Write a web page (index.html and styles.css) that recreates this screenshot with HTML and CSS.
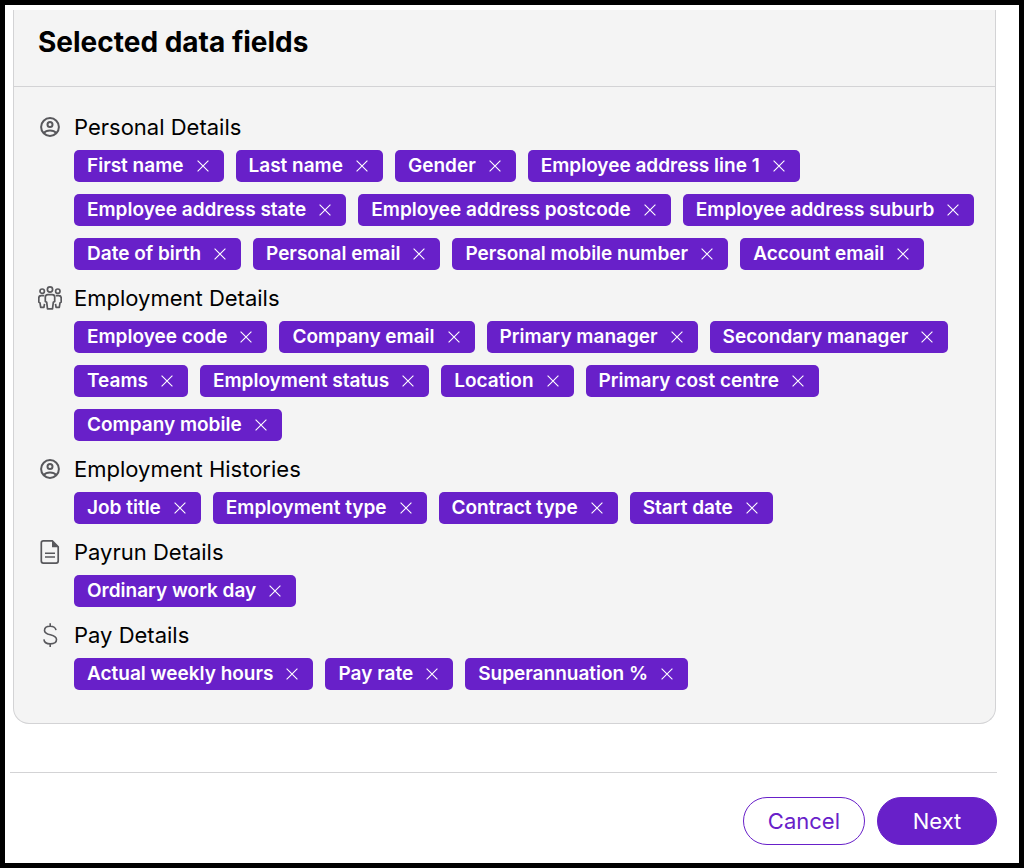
FILE: index.html
```html
<!DOCTYPE html>
<html lang="en">
<head>
<meta charset="utf-8">
<meta name="viewport" content="width=device-width, initial-scale=1">
<title>Selected data fields</title>
<link rel="stylesheet" href="styles.css">
</head>
<body>
<svg class="sprite" aria-hidden="true">
  <symbol id="close" viewBox="0 0 12 12"><path d="M.6.6 11.4 11.4M11.4.6.6 11.4" fill="none" stroke="currentColor" stroke-width="1.1"/></symbol>
  <symbol id="user" viewBox="0 0 24 24"><g fill="none" stroke="currentColor" stroke-width="2"><circle cx="12" cy="12" r="8.900"/><circle cx="12" cy="9.500" r="2.500"/><path d="M5.600 18.200c1.600-1.900 3.800-2.700 6.400-2.700s4.800.8 6.400 2.700"/></g></symbol>
  <symbol id="team" viewBox="0 0 24 24"><g fill="none" stroke="currentColor" stroke-width="1.700" stroke-linejoin="round"><circle cx="12" cy="3.500" r="2.600"/><circle cx="4.200" cy="5.200" r="2.200"/><circle cx="19.800" cy="5.200" r="2.200"/><path d="M9.800 8.700h4.400c1.700 0 2.500 1 2.500 2.500v4.300l-1.400.8-.8 6.500h-5l-.8-6.500-1.400-.8v-4.300c0-1.500.8-2.500 2.500-2.500z"/><path d="M6.300 9.600H3.200C1.600 9.600.8 10.500.8 12v4l1.200.9.700 4.400h3.200l.6-3.500M17.700 9.600h3.100c1.600 0 2.400.9 2.400 2.400v4l-1.200.9-.7 4.400h-3.200l-.6-3.500"/></g></symbol>
  <symbol id="document" viewBox="0 0 24 24"><path d="M5.300.9h9l5.900 6v14.200a2 2 0 0 1-2 2H5.300a2 2 0 0 1-2-2V2.900a2 2 0 0 1 2-2z" fill="none" stroke="currentColor" stroke-width="1.700"/><path d="M14 .8v6.400h6.500z" fill="currentColor"/><path d="M7 13.200h10M7 17h10" stroke="currentColor" stroke-width="1.500"/></symbol>
  <symbol id="dollar" viewBox="0 0 24 24"><path d="M18 7.200C17.600 4.700 15.300 3.200 12.100 3.200 8.700 3.200 6.500 4.900 6.500 7.400c0 6 12 2.800 12 9.200 0 2.600-2.500 4.300-6.200 4.300-3.700 0-6.100-1.700-6.400-4.500M12.200.2v3M12.200 20.900v3" fill="none" stroke="currentColor" stroke-width="1.600"/></symbol>
</svg>
<main class="page">
  <section class="card">
    <header class="card-header"><h1 class="title">Selected data fields</h1></header>
    <div class="card-body">
      <section class="group">
        <svg class="icon"><use href="#user"/></svg>
        <h2 class="group-title">Personal Details</h2>
        <ul class="chips">
          <li class="chip">First name<button class="remove" aria-label="Remove First name"><svg class="cross"><use href="#close"/></svg></button></li>
          <li class="chip">Last name<button class="remove" aria-label="Remove Last name"><svg class="cross"><use href="#close"/></svg></button></li>
          <li class="chip">Gender<button class="remove" aria-label="Remove Gender"><svg class="cross"><use href="#close"/></svg></button></li>
          <li class="chip">Employee address line 1<button class="remove" aria-label="Remove Employee address line 1"><svg class="cross"><use href="#close"/></svg></button></li>
          <li class="chip">Employee address state<button class="remove" aria-label="Remove Employee address state"><svg class="cross"><use href="#close"/></svg></button></li>
          <li class="chip">Employee address postcode<button class="remove" aria-label="Remove Employee address postcode"><svg class="cross"><use href="#close"/></svg></button></li>
          <li class="chip">Employee address suburb<button class="remove" aria-label="Remove Employee address suburb"><svg class="cross"><use href="#close"/></svg></button></li>
          <li class="chip">Date of birth<button class="remove" aria-label="Remove Date of birth"><svg class="cross"><use href="#close"/></svg></button></li>
          <li class="chip">Personal email<button class="remove" aria-label="Remove Personal email"><svg class="cross"><use href="#close"/></svg></button></li>
          <li class="chip">Personal mobile number<button class="remove" aria-label="Remove Personal mobile number"><svg class="cross"><use href="#close"/></svg></button></li>
          <li class="chip">Account email<button class="remove" aria-label="Remove Account email"><svg class="cross"><use href="#close"/></svg></button></li>
        </ul>
      </section>
      <section class="group">
        <svg class="icon"><use href="#team"/></svg>
        <h2 class="group-title">Employment Details</h2>
        <ul class="chips">
          <li class="chip">Employee code<button class="remove" aria-label="Remove Employee code"><svg class="cross"><use href="#close"/></svg></button></li>
          <li class="chip">Company email<button class="remove" aria-label="Remove Company email"><svg class="cross"><use href="#close"/></svg></button></li>
          <li class="chip">Primary manager<button class="remove" aria-label="Remove Primary manager"><svg class="cross"><use href="#close"/></svg></button></li>
          <li class="chip">Secondary manager<button class="remove" aria-label="Remove Secondary manager"><svg class="cross"><use href="#close"/></svg></button></li>
          <li class="chip">Teams<button class="remove" aria-label="Remove Teams"><svg class="cross"><use href="#close"/></svg></button></li>
          <li class="chip">Employment status<button class="remove" aria-label="Remove Employment status"><svg class="cross"><use href="#close"/></svg></button></li>
          <li class="chip">Location<button class="remove" aria-label="Remove Location"><svg class="cross"><use href="#close"/></svg></button></li>
          <li class="chip">Primary cost centre<button class="remove" aria-label="Remove Primary cost centre"><svg class="cross"><use href="#close"/></svg></button></li>
          <li class="chip">Company mobile<button class="remove" aria-label="Remove Company mobile"><svg class="cross"><use href="#close"/></svg></button></li>
        </ul>
      </section>
      <section class="group">
        <svg class="icon"><use href="#user"/></svg>
        <h2 class="group-title">Employment Histories</h2>
        <ul class="chips">
          <li class="chip">Job title<button class="remove" aria-label="Remove Job title"><svg class="cross"><use href="#close"/></svg></button></li>
          <li class="chip">Employment type<button class="remove" aria-label="Remove Employment type"><svg class="cross"><use href="#close"/></svg></button></li>
          <li class="chip">Contract type<button class="remove" aria-label="Remove Contract type"><svg class="cross"><use href="#close"/></svg></button></li>
          <li class="chip">Start date<button class="remove" aria-label="Remove Start date"><svg class="cross"><use href="#close"/></svg></button></li>
        </ul>
      </section>
      <section class="group">
        <svg class="icon"><use href="#document"/></svg>
        <h2 class="group-title">Payrun Details</h2>
        <ul class="chips">
          <li class="chip">Ordinary work day<button class="remove" aria-label="Remove Ordinary work day"><svg class="cross"><use href="#close"/></svg></button></li>
        </ul>
      </section>
      <section class="group">
        <svg class="icon"><use href="#dollar"/></svg>
        <h2 class="group-title">Pay Details</h2>
        <ul class="chips">
          <li class="chip">Actual weekly hours<button class="remove" aria-label="Remove Actual weekly hours"><svg class="cross"><use href="#close"/></svg></button></li>
          <li class="chip">Pay rate<button class="remove" aria-label="Remove Pay rate"><svg class="cross"><use href="#close"/></svg></button></li>
          <li class="chip">Superannuation %<button class="remove" aria-label="Remove Superannuation %"><svg class="cross"><use href="#close"/></svg></button></li>
        </ul>
      </section>
    </div>
  </section>
  <footer class="actions">
    <button class="button button-outline">Cancel</button>
    <button class="button button-primary">Next</button>
  </footer>
</main>
</body>
</html>
```
FILE: styles.css
```css
* { box-sizing: border-box; }
body { margin: 0; font-family: Inter, "Liberation Sans", sans-serif; color: #000; }
.sprite { display: none; }
.page { min-height: 100vh; border: 5px solid #000; padding: 5px 22px 18px 5px; background: #fff; }
.card { margin: 0 1px 0 3px; border: 1px solid #d3d3d5; border-top: 0; border-radius: 0 0 16px 16px; background: #f4f4f4; }
.card-header { padding: 14px 24px 26px; border-bottom: 1px solid #d3d3d5; }
.title { margin: 0; font-size: 28px; line-height: 36px; font-weight: 700; }
.card-body { display: grid; gap: 13px; padding: 25px 12px 33px 24px; }
.group { display: grid; grid-template-columns: 24px 1fr; column-gap: 12px; row-gap: 8px; align-items: center; }
.icon { display: block; width: 24px; height: 24px; color: #58585c; }
.group-title { margin: 0; font-size: 22px; line-height: 30px; font-weight: 400; }
.chips { grid-column: 2; display: flex; flex-wrap: wrap; gap: 12px; margin: 0; padding: 0; list-style: none; }
.chip { display: flex; align-items: center; gap: 13px; height: 32px; padding: 0 15px 1px 13px; border-radius: 5px; background: #6820c9; color: #fff; font-size: 19px; line-height: 23px; font-weight: 600; white-space: nowrap; }
.remove { display: block; padding: 0; border: 0; background: none; color: inherit; cursor: pointer; }
.cross { display: block; width: 12px; height: 12px; }
.actions { display: flex; justify-content: flex-end; gap: 12px; margin-top: 48px; padding-top: 24px; border-top: 1px solid #d3d3d5; }
.button { min-width: 120px; height: 48px; padding: 0 24px; border: 1px solid #6820c9; border-radius: 24px; font-family: inherit; font-size: 22px; font-weight: 400; cursor: pointer; }
.button-outline { background: #fff; color: #6820c9; }
.button-primary { background: #6820c9; color: #fff; }
```
